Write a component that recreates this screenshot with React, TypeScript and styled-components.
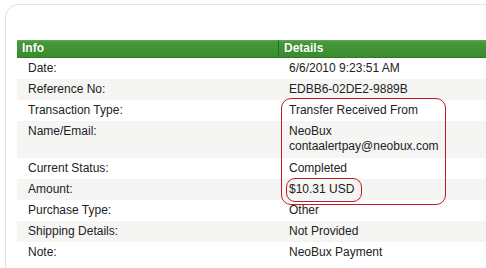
import styled, { createGlobalStyle } from "styled-components";

const GlobalStyle = createGlobalStyle`
  html, body {
    margin: 0;
    padding: 0;
    background: #ffffff;
    overflow: hidden;
  }
  body {
    font-family: "Liberation Sans", Arial, sans-serif;
    font-size: 12px;
    color: #222222;
  }
`;

const Panel = styled.div`
  margin: 4px 0 0 5px;
  width: calc(100vw - 5px);
  height: calc(100vh - 4px);
  border: 1px solid #e2e2e2;
  border-right: none;
  border-bottom: none;
  border-radius: 14px 0 0 0;
  padding: 35px 0 0 11px;
  box-sizing: border-box;
  overflow: hidden;
`;

const Table = styled.div`
  position: relative;
  width: 100%;
`;

const HeaderRow = styled.div`
  display: grid;
  grid-template-columns: 261px 1fr;
  height: 17px;
  background: linear-gradient(to bottom, #5fae4c 0px, #46993a 2px, #3a8b2e 100%);
  border-bottom: 1px solid #2f7a24;
`;

const HeaderCell = styled.div<{ $divider?: boolean }>`
  padding-left: 5px;
  font-weight: bold;
  font-size: 12px;
  line-height: 17px;
  color: #ffffff;
  text-shadow: 0 0 1px #2b6b20;
  border-left: ${(p) => (p.$divider ? "1px solid #2a6d20" : "none")};
`;

const Row = styled.div<{ $shaded?: boolean; $tall?: boolean }>`
  display: grid;
  grid-template-columns: 261px 1fr;
  height: ${(p) => (p.$tall ? "37px" : "21px")};
  background: ${(p) => (p.$shaded ? "#f5f5f4" : "#ffffff")};
`;

const Label = styled.div`
  padding: 3px 0 0 11px;
  line-height: 15px;
  color: #222222;
`;

const Value = styled.div`
  padding: 3px 0 0 11px;
  line-height: 15px;
  color: #222222;
`;

const Ring = styled.div<{ $r: number }>`
  position: absolute;
  border: 1px solid #c4182a;
  border-radius: ${(p) => p.$r}px;
  pointer-events: none;
`;

const rows: { label: string; value: string[] }[] = [
  { label: "Date:", value: ["6/6/2010 9:23:51 AM"] },
  { label: "Reference No:", value: ["EDBB6-02DE2-9889B"] },
  { label: "Transaction Type:", value: ["Transfer Received From"] },
  { label: "Name/Email:", value: ["NeoBux", "contaalertpay@neobux.com"] },
  { label: "Current Status:", value: ["Completed"] },
  { label: "Amount:", value: ["$10.31 USD"] },
  { label: "Purchase Type:", value: ["Other"] },
  { label: "Shipping Details:", value: ["Not Provided"] },
  { label: "Note:", value: ["NeoBux Payment"] },
];

export default function App() {
  return (
    <>
      <GlobalStyle />
      <Panel>
        <Table>
          <HeaderRow>
            <HeaderCell>Info</HeaderCell>
            <HeaderCell $divider>Details</HeaderCell>
          </HeaderRow>
          {rows.map((r, i) => (
            <Row key={r.label} $shaded={i % 2 === 1} $tall={r.value.length > 1}>
              <Label>{r.label}</Label>
              <Value>
                {r.value.map((v) => (
                  <div key={v}>{v}</div>
                ))}
              </Value>
            </Row>
          ))}
          <Ring $r={10} style={{ left: 264, top: 58, width: 163, height: 105 }} />
          <Ring $r={9} style={{ left: 269, top: 138, width: 74, height: 22 }} />
        </Table>
      </Panel>
    </>
  );
}
